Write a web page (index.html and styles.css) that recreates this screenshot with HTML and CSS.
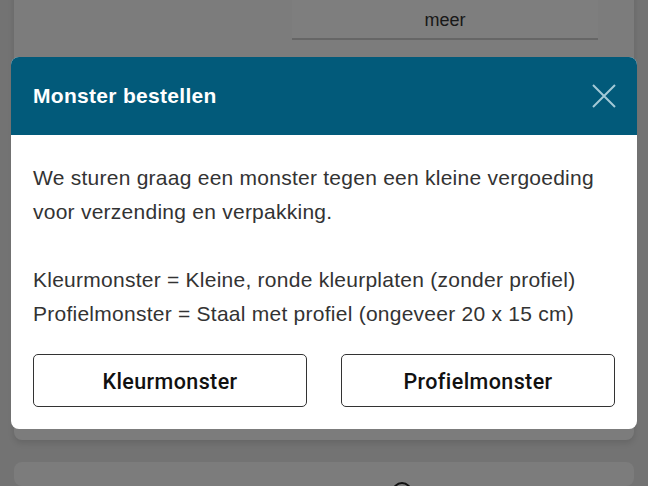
FILE: index.html
```html
<!DOCTYPE html>
<html lang="nl">
<head>
    <meta charset="UTF-8">
    <meta name="viewport" content="width=device-width, initial-scale=1.0">
    <title>Monster bestellen</title>
    <link rel="stylesheet" href="styles.css">
</head>
<body>
    <div class="page">
        <div class="card card-top">
            <div class="more-row">
                <button class="more-btn">meer</button>
            </div>
        </div>
        <div class="card card-next">
            <span class="card-icon"></span>
        </div>
    </div>

    <div class="backdrop"></div>

    <div class="modal" role="dialog" aria-labelledby="modal-title">
        <div class="modal-header">
            <h2 id="modal-title">Monster bestellen</h2>
            <button class="close-btn" aria-label="Sluiten">
                <svg width="24" height="24" viewBox="0 0 24 24">
                    <path d="M1 1 L23 23 M23 1 L1 23" stroke="currentColor" stroke-width="2" fill="none"/>
                </svg>
            </button>
        </div>
        <div class="modal-body">
            <p>We sturen graag een monster tegen een kleine vergoeding voor verzending en verpakking.</p>
            <p class="spaced">Kleurmonster = Kleine, ronde kleurplaten (zonder profiel)<br>
               Profielmonster = Staal met profiel (ongeveer 20 x 15 cm)</p>
            <div class="actions">
                <button class="option-btn">Kleurmonster</button>
                <button class="option-btn">Profielmonster</button>
            </div>
        </div>
    </div>
</body>
</html>
```

FILE: styles.css
```css
body {
    font-family: "Liberation Sans", Arial, Helvetica, sans-serif;
    margin: 0;
    background-color: #e6e6e6;
    color: #333;
    overflow: hidden;
    height: 486px;
}
.page {
    padding: 0 14px;
}
.card {
    background-color: #f8f8f8;
    border-radius: 8px;
}
.card-top {
    height: 450px;
    margin-top: -10px;
    border-radius: 0 0 8px 8px;
    box-shadow: 0 3px 6px rgba(0,0,0,0.12);
}
.more-row {
    padding: 10px 36px 0 278px;
}
.more-btn {
    width: 100%;
    height: 40px;
    padding-top: 4px;
    background-color: #fcfcfc;
    border: none;
    border-bottom: 2px solid #ccc;
    font-family: inherit;
    font-size: 18px;
    color: #333;
}
.card-next {
    margin-top: 22px;
    height: 24px;
    position: relative;
    overflow: hidden;
}
.card-icon {
    position: absolute;
    left: 378px;
    top: 20px;
    width: 16px;
    height: 16px;
    border: 2px solid #222;
    border-radius: 50%;
}
.backdrop {
    position: fixed;
    inset: 0;
    background-color: rgba(0,0,0,0.5);
}
.modal {
    position: fixed;
    top: 57px;
    left: 11px;
    width: 626px;
    background-color: #fff;
    border-radius: 8px;
    overflow: hidden;
}
.modal-header {
    height: 78px;
    background-color: #025a7a;
    display: flex;
    align-items: center;
    justify-content: space-between;
    padding: 0 21px 0 22px;
}
.modal-header h2 {
    margin: 0;
    color: #fff;
    font-size: 21px;
    letter-spacing: 0.3px;
    font-weight: bold;
}
.close-btn {
    background: none;
    border: none;
    padding: 0;
    color: #a3c9d7;
    display: flex;
    cursor: pointer;
}
.modal-body {
    padding: 26px 22px 22px;
}
.modal-body p {
    margin: 0;
    font-size: 21px;
    letter-spacing: 0.25px;
    line-height: 34px;
    color: #333;
}
.modal-body p.spaced {
    margin-top: 34px;
}
.actions {
    display: grid;
    grid-template-columns: 1fr 1fr;
    gap: 34px;
    margin-top: 23px;
}
.option-btn {
    height: 53px;
    padding-top: 2px;
    background-color: #fff;
    border: 1.5px solid #333;
    border-radius: 5px;
    font-family: Roboto, "Liberation Sans", sans-serif;
    font-size: 21.5px;
    letter-spacing: 0.4px;
    font-weight: 500;
    color: #111;
    cursor: pointer;
}
```
